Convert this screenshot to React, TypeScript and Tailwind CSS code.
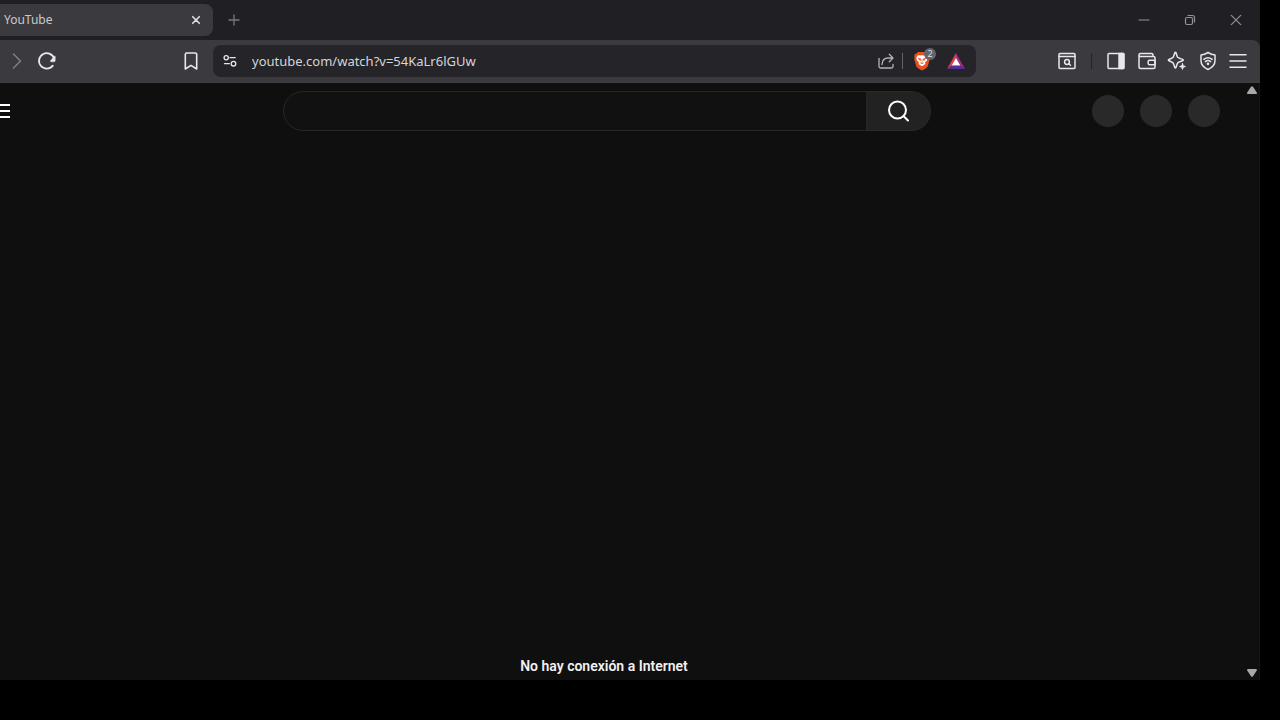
import { useState } from "react";
import type { ReactNode } from "react";

type IconButtonType = {
  label: string;
  className?: string;
  children: ReactNode;
};

function IconButton({ label, className = "w-7", children }: IconButtonType) {
  return (
    <button
      type="button"
      aria-label={label}
      className={`flex h-7 shrink-0 items-center justify-center rounded ${className}`}
    >
      {children}
    </button>
  );
}

type IconType = { size?: number; stroke?: number; children: ReactNode };

function Icon({ size = 20, stroke = 1.5, children }: IconType) {
  return (
    <svg
      width={size}
      height={size}
      viewBox={`0 0 ${size} ${size}`}
      fill="none"
      stroke="currentColor"
      strokeWidth={stroke}
      strokeLinecap="round"
      strokeLinejoin="round"
      className="shrink-0"
    >
      {children}
    </svg>
  );
}

function BraveLion() {
  return (
    <svg width="18" height="20" viewBox="0 0 18 20">
      <path
        d="M5 1h8l1.5 1.6 1.7.4.6 2.6-.5 1.5.4 1.1-2 7.2-2 2L9 19.6l-3.7-2.2-2-2-2-7.2.4-1.1-.5-1.5.6-2.6 1.7-.4z"
        fill="#e8501f"
      />
      <path
        d="M5 4.2l2.5.4L9 4.2l1.5.4 2.5-.4 1.7 2.4-.6 2.7-2.1 2.2.5 1.5L9 15.3l-3.5-2.3.5-1.5-2.1-2.2-.6-2.7z"
        fill="#fff"
      />
      <path
        d="M5.2 7.2l2.6.7-.6 1.9zM12.800 7.2l-2.6.7.6 1.9zM9 8v3.4M7.3 11.8L9 12.8l1.7-1"
        fill="#e8501f"
        stroke="#e8501f"
        strokeWidth="0.6"
      />
    </svg>
  );
}

function TabBar() {
  return (
    <div className="flex h-10 items-center bg-[#202024] text-[#77777c]">
      <div className="flex h-8 w-[213px] items-center justify-between rounded-r-lg bg-[#3b3b3f] pr-[9px] pl-1 text-[#c9c9cd]">
        <span className="text-[12px]">YouTube</span>
        <button
          type="button"
          aria-label="Cerrar pestaña"
          className="flex h-4 w-4 items-center justify-center text-[#dedee2]"
        >
          <Icon size={16} stroke={1.6}>
            <path d="M4.7 4.7l6.6 6.6M11.3 4.7l-6.6 6.6" />
          </Icon>
        </button>
      </div>
      <IconButton label="Nueva pestaña" className="ml-[7px] w-7">
        <Icon size={16} stroke={1.3}>
          <path d="M8 3v10M3 8h10" />
        </Icon>
      </IconButton>
      <div className="ml-auto flex pr-px text-[#929297]">
        <IconButton label="Minimizar" className="w-[46px]">
          <Icon size={16} stroke={1.2}>
            <path d="M3 8h10" />
          </Icon>
        </IconButton>
        <IconButton label="Restaurar" className="w-[46px]">
          <Icon size={16} stroke={1.2}>
            <rect x="3.5" y="5.5" width="7" height="7" rx="1.5" />
            <path d="M6 3.5h4.5a2 2 0 0 1 2 2V10" />
          </Icon>
        </IconButton>
        <IconButton label="Cerrar" className="w-[46px]">
          <Icon size={16} stroke={1.2}>
            <path d="M3.3 3.3l9.4 9.4M12.7 3.3l-9.4 9.4" />
          </Icon>
        </IconButton>
      </div>
    </div>
  );
}

function AddressBar() {
  return (
    <div className="ml-2 flex h-8 flex-1 items-center rounded-lg bg-[#242429] pr-[6px] pl-[3px]">
      <IconButton label="Ver información del sitio">
        <Icon size={16} stroke={1.3}>
          <circle cx="4.2" cy="4.7" r="2.1" />
          <path d="M8 4.7h5.2M2.5 10.7h4.8" />
          <circle cx="11.5" cy="10.7" r="2.3" />
        </Icon>
      </IconButton>
      <input
        aria-label="Barra de direcciones"
        readOnly
        value="youtube.com/watch?v=54KaLr6lGUw"
        className="ml-2 h-8 min-w-0 flex-1 bg-transparent text-[13px] text-[#d5d5d9] outline-none"
      />
      <IconButton label="Compartir" className="w-7 text-[#b4b4b8]">
        <Icon size={18} stroke={1.3}>
          <path d="M2 6.5V14.5a1.5 1.5 0 0 0 1.5 1.5h11a1.5 1.5 0 0 0 1.5-1.5V12.5" />
          <path d="M5 12.5c.3-4 2.5-6.5 6-6.5h4.5M12.3 2.3L16 6l-3.7 3.7" />
        </Icon>
      </IconButton>
      <span className="ml-[2px] h-4 w-px bg-[#626267]" />
      <button
        type="button"
        aria-label="Brave Shields"
        className="relative ml-[5px] flex h-7 w-7 items-center justify-center"
      >
        <BraveLion />
        <span className="absolute top-px right-0 flex h-3 w-3 items-center justify-center rounded-full bg-[#62656f] text-[9px] text-[#dedee2]">
          2
        </span>
      </button>
      <IconButton label="Brave Rewards" className="ml-[6px] w-7">
        <svg width="18" height="16" viewBox="0 0 18 16">
          <path d="M9 0L0 16l5-3.5L9 5.5z" fill="#e0403f" />
          <path d="M9 0l9 16-5-3.5L9 5.5z" fill="#a62a7e" />
          <path d="M0 16h18l-5-3.5H5z" fill="#5b2c99" />
          <path d="M9 5l4.3 7.5H4.7z" fill="#fff" />
        </svg>
      </IconButton>
    </div>
  );
}

function Toolbar() {
  return (
    <div className="bg-[#202024]">
      <div className="flex h-[43px] items-center rounded-tr-lg border-b border-[#3f3f43] bg-[#3b3b3f] pr-2 pl-[3px] text-[#e8e8ec]">
        <IconButton label="Adelante" className="w-7 text-[#808085]">
          <Icon>
            <path d="M6.5 3l7 7-7 7" />
          </Icon>
        </IconButton>
        <IconButton label="Recargar" className="ml-[2px] w-7">
          <Icon stroke={1.8}>
            <path d="M17.2 8A7.7 7.7 0 1 0 15.8 14.6" />
            <path
              d="M18.2 5.5v4a1.3 1.3 0 0 1-1.3 1.3h-2.7a.8.8 0 0 1-.5-1.4l3.7-4.2z"
              fill="currentColor"
              strokeWidth="0.5"
            />
          </Icon>
        </IconButton>
        <IconButton label="Añadir a marcadores" className="ml-[116px] w-7">
          <Icon size={18} stroke={1.6}>
            <path d="M3.3 2.5A1.5 1.5 0 0 1 4.8 1h8.4a1.5 1.5 0 0 1 1.5 1.5V17L9 13.3 3.3 17z" />
          </Icon>
        </IconButton>
        <AddressBar />
        <IconButton label="Buscar pestañas" className="ml-[77px] w-7">
          <Icon stroke={1.5}>
            <rect x="2" y="2.5" width="16" height="15" rx="1" />
            <path d="M2 5.5h16" />
            <circle cx="10" cy="11" r="2.4" />
            <path d="M11.8 12.8l1.7 1.5" />
          </Icon>
        </IconButton>
        <span className="ml-[10px] h-4 w-px bg-[#242429]" />
        <div className="ml-[10px] flex w-[150px] justify-between">
          <IconButton label="Panel lateral">
            <Icon>
              <rect x="2" y="2.5" width="16" height="15" rx="1" />
              <path d="M13 2.5h4.5v15H13z" fill="currentColor" />
            </Icon>
          </IconButton>
          <IconButton label="Cartera">
            <Icon stroke={1.5}>
              <path d="M2 4v12a1.5 1.5 0 0 0 1.5 1.5h13A1.5 1.5 0 0 0 18 16V7a1.5 1.5 0 0 0-1.5-1.5h-13A1.5 1.5 0 0 1 2 4a1.5 1.5 0 0 1 1.5-1.5h11A1.5 1.5 0 0 1 16 4v1.5" />
              <path d="M18 9.3h-5.5a1.3 1.3 0 0 0-1.3 1.3v1.8a1.3 1.3 0 0 0 1.3 1.3H18z" />
            </Icon>
          </IconButton>
          <IconButton label="Leo AI">
            <Icon>
              <path d="M9 1.8c.5 1.5 1 3.7 1.7 4.5.8.8 3.3 1.5 5 2.2.8.3.8.9 0 1.2-1.7.7-4.2 1.4-5 2.2-.7.8-1.2 3-1.7 4.5-.3.7-.9.7-1.2 0-.5-1.5-1-3.7-1.7-4.5-.8-.8-2.6-1.5-4.2-2.2-.7-.3-.7-.9 0-1.2 1.6-.7 3.4-1.4 4.2-2.2.7-.8 1.2-3 1.7-4.5.3-.7.9-.7 1.2 0z" />
              <path
                d="M15.5 12.5l.8 2.2 2.2.8-2.2.8-.8 2.2-.8-2.2-2.2-.8 2.2-.8z"
                fill="currentColor"
                strokeWidth="0.8"
              />
            </Icon>
          </IconButton>
          <IconButton label="VPN">
            <Icon stroke={1.5}>
              <path d="M10 1.5c2.3 1.5 4.6 2.3 7 2.5v5.5c0 4.2-2.8 7.2-7 9-4.2-1.8-7-4.8-7-9V4c2.4-.2 4.7-1 7-2.5z" />
              <path d="M5.8 8.3c2.5-1.9 5.9-1.9 8.4 0M7.3 10.6c1.6-1.2 3.8-1.2 5.4 0" />
              <circle cx="10" cy="12.8" r=".6" fill="currentColor" />
            </Icon>
          </IconButton>
          <IconButton label="Menú">
            <Icon>
              <path d="M2 3.7h16M2 10h16M2 16.3h16" />
            </Icon>
          </IconButton>
        </div>
      </div>
    </div>
  );
}

function PageHeader() {
  const [searchQuery, setSearchQuery] = useState("");

  return (
    <header className="flex h-14 items-center pr-6">
      <div className="w-[283px] shrink-0">
        <button type="button" aria-label="Guía" className="flex h-10 w-3 items-center text-white">
          <svg width="10" height="16" viewBox="0 0 10 16" stroke="currentColor" strokeWidth="2">
            <path d="M0 2h10M0 8h10M0 14h10" />
          </svg>
        </button>
      </div>
      <form
        className="flex h-10 max-w-[648px] flex-1"
        onSubmit={(e) => e.preventDefault()}
      >
        <input
          type="text"
          aria-label="Buscar"
          value={searchQuery}
          onChange={(e) => setSearchQuery(e.target.value)}
          className="min-w-0 flex-1 rounded-l-full border border-[#272727] bg-[#111111] px-4 text-[16px] text-white outline-none"
        />
        <button
          type="submit"
          aria-label="Buscar"
          className="flex w-16 items-center justify-center rounded-r-full border border-l-0 border-[#292929] bg-[#222222] text-white"
        >
          <Icon size={24} stroke={2}>
            <circle cx="10.5" cy="11" r="8.5" />
            <path d="M16.7 17.2l4.3 4.3" />
          </Icon>
        </button>
      </form>
      <div className="ml-auto flex gap-4">
        {[0, 1, 2].map((index) => (
          <div key={index} className="h-8 w-8 rounded-full bg-[#292929]" />
        ))}
      </div>
    </header>
  );
}

function Scrollbar() {
  return (
    <div className="flex w-4 flex-col items-center justify-between border-r border-[#171717] py-[3px] text-[#a8a8a8]">
      <button type="button" aria-label="Desplazar hacia arriba">
        <svg width="10" height="8" viewBox="0 0 10 8" fill="currentColor">
          <path d="M4 .7q1-1 2 0l3.8 5.8q.5 1.5-1 1.5H1.2q-1.5 0-1-1.5z" />
        </svg>
      </button>
      <button type="button" aria-label="Desplazar hacia abajo">
        <svg width="10" height="8" viewBox="0 0 10 8" fill="currentColor">
          <path d="M4 7.3q1 1 2 0l3.8-5.8Q10.3 0 8.8 0H1.2Q-.3 0 .2 1.5z" />
        </svg>
      </button>
    </div>
  );
}

export default function App() {
  return (
    <div className="flex min-h-screen flex-col bg-black pr-5 pb-10 font-['Noto_Sans',sans-serif]">
      <TabBar />
      <Toolbar />
      <div className="flex flex-1 bg-[#0f0f0f] font-[Roboto,sans-serif]">
        <main className="flex min-w-0 flex-1 flex-col">
          <PageHeader />
          <div className="mt-auto pr-9 pb-[3px] text-center text-[14px] font-semibold text-[#f1f1f1]">
            No hay conexión a Internet
          </div>
        </main>
        <Scrollbar />
      </div>
    </div>
  );
}
